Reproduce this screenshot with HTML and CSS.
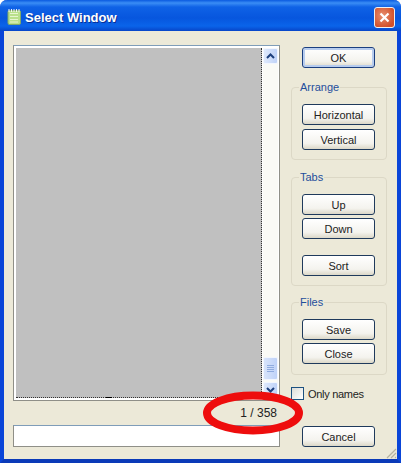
FILE: index.html
```html
<!DOCTYPE html>
<html lang="en">

<head>
    <meta charset="UTF-8">
    <title>Select Window</title>
    <link rel="stylesheet" href="styles.css">
</head>

<body>
    <div class="window">
        <div class="titlebar">
            <svg class="app-icon" width="16" height="18" viewBox="0 0 16 18">
                <rect x="2" y="2.5" width="12.5" height="14" rx="1.5" fill="#b9e08a" stroke="#7fa96a"/>
                <path d="M4 5.5h8M4 8.5h8M4 11.5h8M4 14h8" stroke="#e6f5cf" stroke-width="1"/>
                <path d="M3 1v3M5.5 1v3M8 1v3M10.5 1v3M13 1v3" stroke="#f4f4f4" stroke-width="1"/>
            </svg>
            <span class="title">Select Window</span>
            <div class="close-btn">
                <svg width="11" height="11" viewBox="0 0 11 11">
                    <path d="M1.5 1.5l8 8M9.5 1.5l-8 8" stroke="#fff" stroke-width="2.2"/>
                </svg>
            </div>
        </div>

        <div class="content">
            <div class="left">
                <div class="listbox">
                    <div class="list-view">
                        <span class="list-mark"></span>
                    </div>
                    <div class="scrollbar">
                        <div class="scroll-btn">
                            <svg width="9" height="6" viewBox="0 0 9 6"><path d="M1 5l3.5-3.5L8 5" fill="none" stroke="#1d3f7d" stroke-width="2"/></svg>
                        </div>
                        <div class="scroll-track"></div>
                        <div class="scroll-thumb">
                            <span class="grip"></span>
                            <span class="grip"></span>
                            <span class="grip"></span>
                            <span class="grip"></span>
                        </div>
                        <div class="scroll-btn">
                            <svg width="9" height="6" viewBox="0 0 9 6"><path d="M1 1l3.5 3.5L8 1" fill="none" stroke="#1d3f7d" stroke-width="2"/></svg>
                        </div>
                    </div>
                </div>
                <div class="counter">1 / 358</div>
                <div class="text-input"></div>
            </div>

            <div class="right">
                <button class="button button-default">OK</button>

                <div class="group group-arrange">
                    <div class="group-label">Arrange</div>
                    <button class="button">Horizontal</button>
                    <button class="button">Vertical</button>
                </div>

                <div class="group group-tabs">
                    <div class="group-label">Tabs</div>
                    <button class="button">Up</button>
                    <button class="button">Down</button>
                    <button class="button button-sort">Sort</button>
                </div>

                <div class="group group-files">
                    <div class="group-label">Files</div>
                    <button class="button">Save</button>
                    <button class="button">Close</button>
                </div>

                <div class="check-row">
                    <span class="checkbox"></span>
                    <span>Only names</span>
                </div>

                <button class="button button-cancel">Cancel</button>
            </div>
        </div>

        <!-- red marker drawn over the screenshot -->
        <svg class="marker" width="102" height="46" viewBox="0 0 102 46">
            <ellipse cx="51" cy="23" rx="46" ry="17.5" fill="none" stroke="#ee0d0d" stroke-width="8"/>
        </svg>

        <svg class="grip-corner" width="12" height="12" viewBox="0 0 12 12">
            <path d="M11 2L2 11M11 6L6 11M11 10L10 11" stroke="#b5b2a0" stroke-width="1.2"/>
        </svg>
    </div>
</body>

</html>
```

FILE: styles.css
```css
html, body {
    margin: 0;
    padding: 0;
}

body {
    width: 401px;
    height: 463px;
    overflow: hidden;
    font-family: 'Liberation Sans', Arial, sans-serif;
    font-size: 11px;
    color: #222;
}

.window {
    position: relative;
    width: 401px;
    height: 463px;
    box-sizing: border-box;
    display: flex;
    flex-direction: column;
    background-color: #ece9d8;
    border-left: 4px solid #0a45d8;
    border-right: 4px solid #0a45d8;
    border-bottom: 4px solid #0a3ab8;
    border-radius: 7px 7px 0 0;
}

.titlebar {
    display: flex;
    align-items: center;
    box-sizing: border-box;
    height: 31px;
    margin: 0 -4px;
    padding: 3px 6px 0 6px;
    flex-shrink: 0;
    border-radius: 7px 7px 0 0;
    background: linear-gradient(to bottom, #0a5ae0 0, #3a8df5 3px, #0f62e6 7px, #0756de 18px, #0a64ea 26px, #0745c8 31px);
}

.app-icon {
    margin-right: 3px;
}

.title {
    flex: 1;
    color: #fff;
    font-size: 13px;
    font-weight: bold;
    text-shadow: 1px 1px 0 #0a2f94;
}

.close-btn {
    width: 21px;
    height: 21px;
    box-sizing: border-box;
    display: flex;
    align-items: center;
    justify-content: center;
    border: 1px solid #f0f0f0;
    border-radius: 3px;
    background: radial-gradient(circle at 40% 40%, #e8906f, #d2502a 75%);
}

.content {
    flex: 1;
    display: flex;
    padding: 14px 10px 11px 9px;
}

.left {
    width: 267px;
    display: flex;
    flex-direction: column;
}

.listbox {
    height: 356px;
    box-sizing: border-box;
    display: flex;
    border: 1px solid #8f8f88;
    border-top-color: #7f9db9;
    background-color: #fff;
    padding: 2px 1px 2px 2px;
}

.list-view {
    position: relative;
    width: 245px;
    margin-right: 1px;
    background-color: #c0c0c0;
    border-right: 1px dotted #333;
    border-bottom: 1px dotted #333;
}

.list-mark {
    position: absolute;
    left: 90px;
    bottom: -1px;
    width: 6px;
    height: 1px;
    background-color: #000;
}

.scrollbar {
    width: 15px;
    display: flex;
    flex-direction: column;
    background-color: #fafaf6;
}

.scroll-btn {
    height: 16px;
    display: flex;
    align-items: center;
    justify-content: center;
    background: linear-gradient(to right, #dfe9fc, #bfd2f8);
    border: 1px solid #f2f6fe;
    box-sizing: border-box;
    border-radius: 2px;
}

.scroll-track {
    flex: 1;
}

.scroll-thumb {
    height: 23px;
    margin-bottom: 2px;
    display: flex;
    flex-direction: column;
    align-items: center;
    justify-content: center;
    gap: 1px;
    background: linear-gradient(to right, #d8e4fb, #bfd2f8);
    border: 1px solid #f2f6fe;
    box-sizing: border-box;
    border-radius: 2px;
}

.grip {
    width: 7px;
    height: 1px;
    background-color: #8fabdf;
}

.counter {
    height: 24px;
    line-height: 24px;
    text-align: right;
    padding-right: 3px;
    font-size: 12px;
}

.text-input {
    height: 22px;
    box-sizing: border-box;
    border: 1px solid #8f8f88;
    border-top-color: #7f9db9;
    background-color: #fff;
}

.right {
    width: 96px;
    margin-left: 11px;
    display: flex;
    flex-direction: column;
}

.button {
    width: 73px;
    height: 21px;
    flex-shrink: 0;
    padding: 0;
    display: block;
    font-family: inherit;
    font-size: 11px;
    color: #222;
    border: 1px solid #1f3a5c;
    border-radius: 3px;
    background: linear-gradient(to bottom, #ffffff, #f4f3ee 70%, #dcd8c8);
}

.button-default {
    margin-top: 2px;
    margin-left: 11px;
    border-color: #1b3f80;
    box-shadow: inset 0 0 0 2px #b7ccee;
}

.button-cancel {
    margin-top: 26px;
    margin-left: 11px;
}

.group {
    position: relative;
    width: 96px;
    box-sizing: border-box;
    border: 1px solid #dcd8c6;
    border-radius: 4px;
    padding: 16px 10px 0 10px;
    display: flex;
    flex-direction: column;
    gap: 3px;
}

.group-arrange {
    height: 73px;
    margin-top: 19px;
    gap: 4px;
}

.group-tabs {
    height: 109px;
    margin-top: 17px;
}

.group-files {
    height: 73px;
    margin-top: 16px;
}

.group-label {
    position: absolute;
    top: -7px;
    left: 7px;
    padding: 0 1px;
    color: #1f4e9c;
    font-size: 11px;
    line-height: 13px;
    background-color: #ece9d8;
}

.group .button-sort {
    margin-top: 13px;
}

.check-row {
    width: 96px;
    margin-top: 12px;
    display: flex;
    align-items: center;
    gap: 4px;
    height: 13px;
    letter-spacing: -0.3px;
    white-space: nowrap;
}

.checkbox {
    width: 13px;
    height: 13px;
    box-sizing: border-box;
    flex-shrink: 0;
    border: 1px solid #1c5180;
    background: linear-gradient(135deg, #dcdcd7, #ffffff);
}

.marker {
    position: absolute;
    left: 198px;
    top: 390px;
}

.grip-corner {
    position: absolute;
    right: 0;
    bottom: 0;
}
```
